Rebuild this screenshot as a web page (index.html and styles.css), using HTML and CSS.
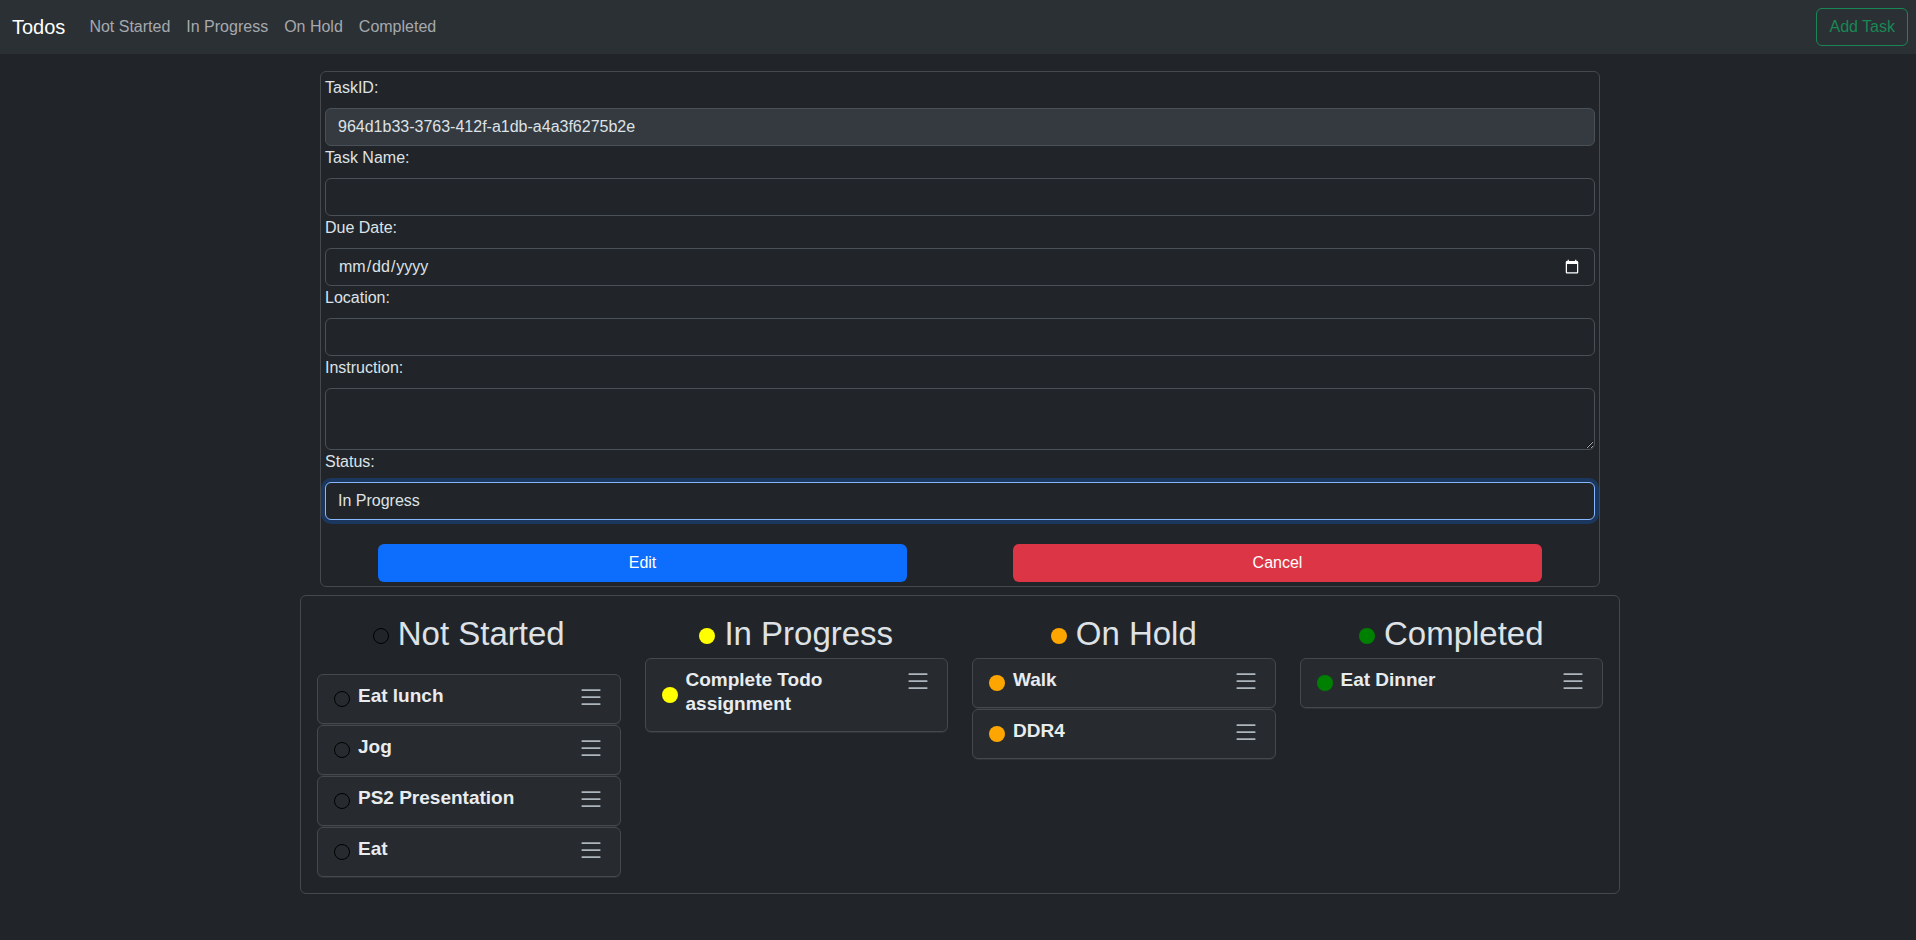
FILE: index.html
```html
<!DOCTYPE html>
<html lang="en">
<head>
<meta charset="utf-8">
<title>Todos</title>
<link rel="stylesheet" href="styles.css">
</head>
<body>
<div class="page">
  <nav class="navbar">
    <div class="nav-left">
      <a class="brand" href="#">Todos</a>
      <ul class="nav-links">
        <li><a href="#">Not Started</a></li>
        <li><a href="#">In Progress</a></li>
        <li><a href="#">On Hold</a></li>
        <li><a href="#">Completed</a></li>
      </ul>
    </div>
    <button class="btn-add" type="button">Add Task</button>
  </nav>

  <form class="task-form">
    <label class="form-label">TaskID:</label>
    <input class="field field-readonly" type="text" value="964d1b33-3763-412f-a1db-a4a3f6275b2e" readonly>
    <label class="form-label">Task Name:</label>
    <input class="field" type="text">
    <label class="form-label">Due Date:</label>
    <input class="field" type="date">
    <label class="form-label">Location:</label>
    <input class="field" type="text">
    <label class="form-label">Instruction:</label>
    <textarea class="field field-area"></textarea>
    <label class="form-label">Status:</label>
    <input class="field field-focus" type="text" value="In Progress">
    <div class="form-actions">
      <div class="action-col"><button class="btn btn-primary" type="button">Edit</button></div>
      <div class="action-col"><button class="btn btn-danger" type="button">Cancel</button></div>
    </div>
  </form>

  <section class="board">
    <div class="board-col">
      <h2 class="col-title"><span class="dot dot-none"></span>Not Started</h2>
      <div class="task-list task-list-offset">
        <div class="task-card"><span class="dot dot-none"></span><h5 class="task-name">Eat lunch</h5><svg class="grip" viewBox="0 0 16 16"><path d="M2.5 12a.5.5 0 0 1 .5-.5h10a.5.5 0 0 1 0 1H3a.5.5 0 0 1-.5-.5m0-4a.5.5 0 0 1 .5-.5h10a.5.5 0 0 1 0 1H3a.5.5 0 0 1-.5-.5m0-4a.5.5 0 0 1 .5-.5h10a.5.5 0 0 1 0 1H3a.5.5 0 0 1-.5-.5"/></svg></div>
        <div class="task-card"><span class="dot dot-none"></span><h5 class="task-name">Jog</h5><svg class="grip" viewBox="0 0 16 16"><path d="M2.5 12a.5.5 0 0 1 .5-.5h10a.5.5 0 0 1 0 1H3a.5.5 0 0 1-.5-.5m0-4a.5.5 0 0 1 .5-.5h10a.5.5 0 0 1 0 1H3a.5.5 0 0 1-.5-.5m0-4a.5.5 0 0 1 .5-.5h10a.5.5 0 0 1 0 1H3a.5.5 0 0 1-.5-.5"/></svg></div>
        <div class="task-card"><span class="dot dot-none"></span><h5 class="task-name">PS2 Presentation</h5><svg class="grip" viewBox="0 0 16 16"><path d="M2.5 12a.5.5 0 0 1 .5-.5h10a.5.5 0 0 1 0 1H3a.5.5 0 0 1-.5-.5m0-4a.5.5 0 0 1 .5-.5h10a.5.5 0 0 1 0 1H3a.5.5 0 0 1-.5-.5m0-4a.5.5 0 0 1 .5-.5h10a.5.5 0 0 1 0 1H3a.5.5 0 0 1-.5-.5"/></svg></div>
        <div class="task-card"><span class="dot dot-none"></span><h5 class="task-name">Eat</h5><svg class="grip" viewBox="0 0 16 16"><path d="M2.5 12a.5.5 0 0 1 .5-.5h10a.5.5 0 0 1 0 1H3a.5.5 0 0 1-.5-.5m0-4a.5.5 0 0 1 .5-.5h10a.5.5 0 0 1 0 1H3a.5.5 0 0 1-.5-.5m0-4a.5.5 0 0 1 .5-.5h10a.5.5 0 0 1 0 1H3a.5.5 0 0 1-.5-.5"/></svg></div>
      </div>
    </div>
    <div class="board-col">
      <h2 class="col-title"><span class="dot dot-yellow"></span>In Progress</h2>
      <div class="task-list">
        <div class="task-card"><span class="dot dot-yellow"></span><h5 class="task-name">Complete Todo assignment</h5><svg class="grip" viewBox="0 0 16 16"><path d="M2.5 12a.5.5 0 0 1 .5-.5h10a.5.5 0 0 1 0 1H3a.5.5 0 0 1-.5-.5m0-4a.5.5 0 0 1 .5-.5h10a.5.5 0 0 1 0 1H3a.5.5 0 0 1-.5-.5m0-4a.5.5 0 0 1 .5-.5h10a.5.5 0 0 1 0 1H3a.5.5 0 0 1-.5-.5"/></svg></div>
      </div>
    </div>
    <div class="board-col">
      <h2 class="col-title"><span class="dot dot-orange"></span>On Hold</h2>
      <div class="task-list">
        <div class="task-card"><span class="dot dot-orange"></span><h5 class="task-name">Walk</h5><svg class="grip" viewBox="0 0 16 16"><path d="M2.5 12a.5.5 0 0 1 .5-.5h10a.5.5 0 0 1 0 1H3a.5.5 0 0 1-.5-.5m0-4a.5.5 0 0 1 .5-.5h10a.5.5 0 0 1 0 1H3a.5.5 0 0 1-.5-.5m0-4a.5.5 0 0 1 .5-.5h10a.5.5 0 0 1 0 1H3a.5.5 0 0 1-.5-.5"/></svg></div>
        <div class="task-card"><span class="dot dot-orange"></span><h5 class="task-name">DDR4</h5><svg class="grip" viewBox="0 0 16 16"><path d="M2.5 12a.5.5 0 0 1 .5-.5h10a.5.5 0 0 1 0 1H3a.5.5 0 0 1-.5-.5m0-4a.5.5 0 0 1 .5-.5h10a.5.5 0 0 1 0 1H3a.5.5 0 0 1-.5-.5m0-4a.5.5 0 0 1 .5-.5h10a.5.5 0 0 1 0 1H3a.5.5 0 0 1-.5-.5"/></svg></div>
      </div>
    </div>
    <div class="board-col">
      <h2 class="col-title"><span class="dot dot-green"></span>Completed</h2>
      <div class="task-list">
        <div class="task-card"><span class="dot dot-green"></span><h5 class="task-name">Eat Dinner</h5><svg class="grip" viewBox="0 0 16 16"><path d="M2.5 12a.5.5 0 0 1 .5-.5h10a.5.5 0 0 1 0 1H3a.5.5 0 0 1-.5-.5m0-4a.5.5 0 0 1 .5-.5h10a.5.5 0 0 1 0 1H3a.5.5 0 0 1-.5-.5m0-4a.5.5 0 0 1 .5-.5h10a.5.5 0 0 1 0 1H3a.5.5 0 0 1-.5-.5"/></svg></div>
      </div>
    </div>
  </section>
</div>
</body>
</html>
```

FILE: styles.css
```css
html {
  color-scheme: dark;
  overflow: hidden;
}

body {
  margin: 0;
  background: #212529;
  color: #dee2e6;
  font-family: "Liberation Sans", Arial, sans-serif;
  font-size: 16px;
  line-height: 1.5;
  overflow: hidden;
}

.page {
  width: 1920px;
}

/* Navbar */
.navbar {
  display: flex;
  align-items: center;
  justify-content: space-between;
  height: 54px;
  box-sizing: border-box;
  padding: 8px 12px;
  background: #2b3035;
}

.nav-left {
  display: flex;
  align-items: center;
}

.brand {
  font-size: 20px;
  line-height: 30px;
  color: #ffffff;
  text-decoration: none;
  margin-right: 16px;
}

.nav-links {
  display: flex;
  list-style: none;
  margin: 0;
  padding: 0;
}

.nav-links a {
  display: block;
  padding: 8px;
  line-height: 24px;
  color: #a6a9ad;
  text-decoration: none;
}

.btn-add {
  height: 38px;
  padding: 6px 12px;
  font-family: inherit;
  font-size: 16px;
  line-height: 24px;
  color: #198754;
  background: transparent;
  border: 1px solid #198754;
  border-radius: 6px;
  box-sizing: border-box;
}

/* Form */
.task-form {
  width: 1280px;
  box-sizing: border-box;
  margin: 17px auto 0;
  padding: 4px;
  border: 1px solid #45494e;
  border-radius: 6px;
}

.form-label {
  display: block;
  line-height: 24px;
  margin-bottom: 8px;
}

.field {
  display: block;
  width: 100%;
  height: 38px;
  box-sizing: border-box;
  padding: 6px 12px;
  margin: 0;
  font-family: inherit;
  font-size: 16px;
  line-height: 24px;
  color: #dee2e6;
  background: #212529;
  border: 1px solid #495057;
  border-radius: 6px;
  outline: none;
}

.field-readonly {
  background: #343a40;
}

.field-area {
  height: 62px;
  resize: vertical;
}

.field-focus {
  border-color: #86b7fe;
  box-shadow: 0 0 0 4px rgba(13, 110, 253, 0.25);
}

.form-actions {
  display: grid;
  grid-template-columns: 1fr 1fr;
  margin-top: 24px;
}

.action-col {
  display: flex;
  justify-content: center;
}

.btn {
  width: 83.333%;
  height: 38px;
  font-family: inherit;
  font-size: 16px;
  line-height: 24px;
  color: #ffffff;
  border: none;
  border-radius: 6px;
}

.btn-primary {
  background: #0d6efd;
}

.btn-danger {
  background: #dc3545;
}

/* Board */
.board {
  width: 1320px;
  box-sizing: border-box;
  margin: 8px auto 0;
  padding: 4px;
  border: 1px solid #45494e;
  border-radius: 6px;
  display: grid;
  grid-template-columns: repeat(4, 1fr);
}

.board-col {
  padding: 12px 12px 11px;
}

.col-title {
  display: flex;
  justify-content: center;
  align-items: center;
  gap: 9px;
  margin: 3px 0 5px;
  font-size: 33px;
  font-weight: 400;
  line-height: 38px;
  color: #dee2e6;
}

.col-title .dot {
  margin-top: 3px;
}

.dot {
  flex: none;
  width: 16px;
  height: 16px;
  box-sizing: border-box;
  border-radius: 50%;
}

.dot-none {
  border: 1.5px solid #000000;
}

.dot-yellow {
  background: #ffff00;
}

.dot-orange {
  background: #ffa500;
}

.dot-green {
  background: #008000;
}

.task-list-offset {
  padding-top: 16px;
}

.task-card {
  display: flex;
  align-items: center;
  padding: 8px 15px 8px 16px;
  margin-bottom: 1px;
  background: #272b30;
  border: 1px solid #45494e;
  border-radius: 6px;
  box-shadow: 0 1px 0 rgba(255, 255, 255, 0.06);
}

.task-name {
  flex: 1;
  margin: 1px 0 7px 8px;
  font-size: 19px;
  font-weight: 700;
  line-height: 24px;
  color: #e9ecef;
}

.grip {
  flex: none;
  align-self: flex-start;
  width: 28px;
  height: 28px;
  fill: #adb5bd;
}
```
